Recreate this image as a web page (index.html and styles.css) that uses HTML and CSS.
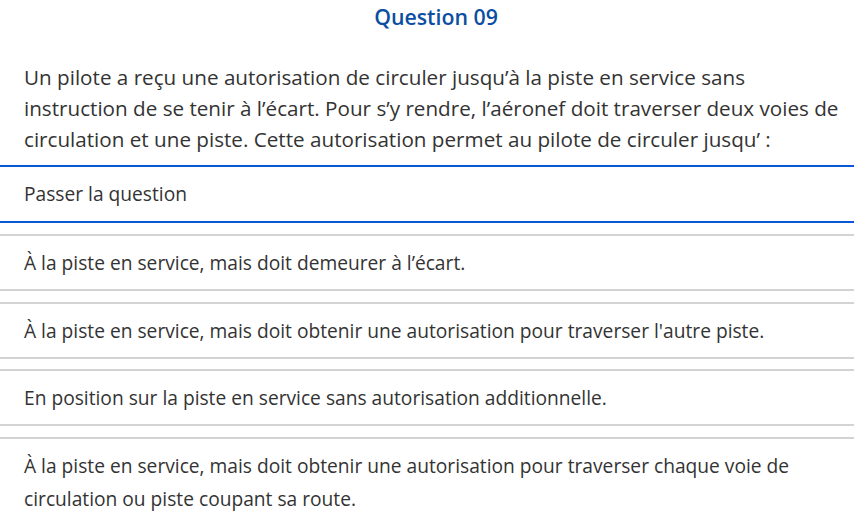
FILE: index.html
```html
<!DOCTYPE html>
<html lang="fr">
<head>
<meta charset="utf-8">
<title>Question 09</title>
<link rel="stylesheet" href="styles.css">
</head>
<body>
<main class="quiz">
  <h1 class="title">Question 09</h1>
  <p class="question">Un pilote a reçu une autorisation de circuler jusqu’à la piste en service sans instruction de se tenir à l’écart. Pour s’y rendre, l’aéronef doit traverser deux voies de circulation et une piste. Cette autorisation permet au pilote de circuler jusqu’ :</p>
  <div class="skip">Passer la question</div>
  <ul class="options">
    <li class="option">À la piste en service, mais doit demeurer à l’écart.</li>
    <li class="option">À la piste en service, mais doit obtenir une autorisation pour traverser l'autre piste.</li>
    <li class="option">En position sur la piste en service sans autorisation additionnelle.</li>
    <li class="option">À la piste en service, mais doit obtenir une autorisation pour traverser chaque voie de circulation ou piste coupant sa route.</li>
  </ul>
</main>
</body>
</html>
```
FILE: styles.css
```css
html, body {
  margin: 0;
  padding: 0;
  background: #ffffff;
}
body {
  font-family: "Open Sans", "Noto Sans", sans-serif;
  color: #333333;
}
.quiz {
  width: 854px;
}
.title {
  margin: 0;
  padding: 2px 0 0 18px;
  text-align: center;
  font-size: 21.3px;
  line-height: 30px;
  font-weight: 600;
  color: #0b4ea2;
}
.question {
  margin: 30px 0 10px;
  padding: 0 8px 0 24px;
  font-size: 20.65px;
  line-height: 31px;
}
.skip {
  border-top: 2px solid #0a58d6;
  border-bottom: 2px solid #0a58d6;
  padding: 10px 24px;
  font-size: 19.2px;
  line-height: 34px;
}
.options {
  list-style: none;
  margin: 0;
  padding: 0;
}
.option {
  margin-top: 10.8px;
  border-top: 2px solid #d3d3d3;
  border-bottom: 2px solid #d3d3d3;
  padding: 10px 24px;
  font-size: 19.2px;
  line-height: 33px;
}
```
